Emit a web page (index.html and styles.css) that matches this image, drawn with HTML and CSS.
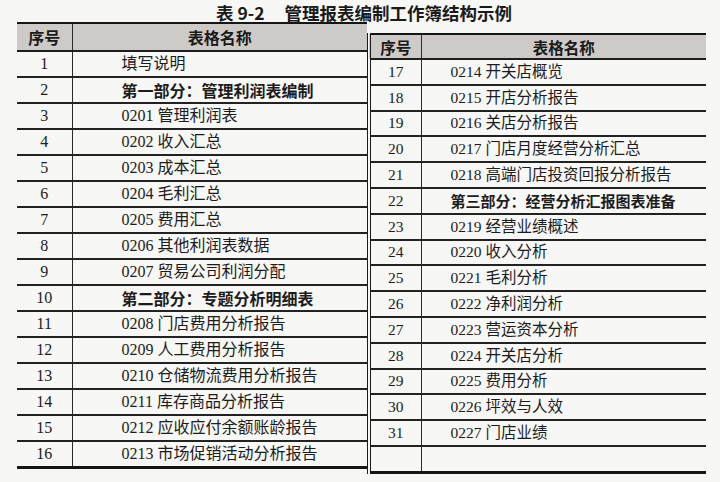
FILE: index.html
```html
<!DOCTYPE html>
<html lang="zh-CN">
<head>
<meta charset="utf-8">
<link rel="stylesheet" href="styles.css">
</head>
<body>
<div class="page">
  <h1 class="title"><span class="tno">表 9-2</span><span>管理报表编制工作簿结构示例</span></h1>
  <div class="tables">
    <table class="tbl left">
      <colgroup><col class="c-num"><col></colgroup>
      <thead><tr><th>序号</th><th>表格名称</th></tr></thead>
      <tbody>
        <tr><td class="num">1</td><td class="name">填写说明</td></tr>
        <tr><td class="num">2</td><td class="name bold">第一部分：管理利润表编制</td></tr>
        <tr><td class="num">3</td><td class="name">0201 管理利润表</td></tr>
        <tr><td class="num">4</td><td class="name">0202 收入汇总</td></tr>
        <tr><td class="num">5</td><td class="name">0203 成本汇总</td></tr>
        <tr><td class="num">6</td><td class="name">0204 毛利汇总</td></tr>
        <tr><td class="num">7</td><td class="name">0205 费用汇总</td></tr>
        <tr><td class="num">8</td><td class="name">0206 其他利润表数据</td></tr>
        <tr><td class="num">9</td><td class="name">0207 贸易公司利润分配</td></tr>
        <tr><td class="num">10</td><td class="name bold">第二部分：专题分析明细表</td></tr>
        <tr><td class="num">11</td><td class="name">0208 门店费用分析报告</td></tr>
        <tr><td class="num">12</td><td class="name">0209 人工费用分析报告</td></tr>
        <tr><td class="num">13</td><td class="name">0210 仓储物流费用分析报告</td></tr>
        <tr><td class="num">14</td><td class="name">0211 库存商品分析报告</td></tr>
        <tr><td class="num">15</td><td class="name">0212 应收应付余额账龄报告</td></tr>
        <tr><td class="num">16</td><td class="name">0213 市场促销活动分析报告</td></tr>
      </tbody>
    </table>
    <table class="tbl right">
      <colgroup><col class="c-num2"><col></colgroup>
      <thead><tr><th>序号</th><th>表格名称</th></tr></thead>
      <tbody>
        <tr><td class="num">17</td><td class="name">0214 开关店概览</td></tr>
        <tr><td class="num">18</td><td class="name">0215 开店分析报告</td></tr>
        <tr><td class="num">19</td><td class="name">0216 关店分析报告</td></tr>
        <tr><td class="num">20</td><td class="name">0217 门店月度经营分析汇总</td></tr>
        <tr><td class="num">21</td><td class="name">0218 高端门店投资回报分析报告</td></tr>
        <tr><td class="num">22</td><td class="name bold">第三部分：经营分析汇报图表准备</td></tr>
        <tr><td class="num">23</td><td class="name">0219 经营业绩概述</td></tr>
        <tr><td class="num">24</td><td class="name">0220 收入分析</td></tr>
        <tr><td class="num">25</td><td class="name">0221 毛利分析</td></tr>
        <tr><td class="num">26</td><td class="name">0222 净利润分析</td></tr>
        <tr><td class="num">27</td><td class="name">0223 营运资本分析</td></tr>
        <tr><td class="num">28</td><td class="name">0224 开关店分析</td></tr>
        <tr><td class="num">29</td><td class="name">0225 费用分析</td></tr>
        <tr><td class="num">30</td><td class="name">0226 坪效与人效</td></tr>
        <tr><td class="num">31</td><td class="name">0227 门店业绩</td></tr>
        <tr><td class="num"></td><td class="name"></td></tr>
      </tbody>
    </table>
  </div>
</div>
</body>
</html>
```

FILE: styles.css
```css
html, body {
  margin: 0;
  padding: 0;
  background: #f7f7f5;
}

.page {
  width: 720px;
  height: 482px;
  overflow: hidden;
  color: #1c1c1c;
  font-family: "Liberation Serif", "Noto Sans CJK SC", serif;
}

.title {
  margin: 0;
  padding: 3px 0 0 216px;
  height: 19px;
  display: flex;
  gap: 20px;
  font-family: "Noto Sans CJK SC", "Liberation Sans", sans-serif;
  font-size: 17.5px;
  line-height: 19px;
  font-weight: 700;
  color: #1a1a1a;
}

.tables {
  display: flex;
  align-items: flex-start;
  padding-left: 17px;
}

.tbl {
  border-collapse: collapse;
  table-layout: fixed;
}

.left {
  width: 350px;
  border-top: 2px solid #151515;
  border-bottom: 3px solid #151515;
}

.right {
  width: 339px;
  margin-top: 11px;
  border-top: 2px solid #151515;
  border-bottom: 3px solid #151515;
  border-left: 4px double #1a1a1a;
}

.c-num { width: 55px; }
.c-num2 { width: 52px; }

.tbl th {
  background: #cdcac8;
  font-family: "Noto Sans CJK SC", "Liberation Sans", sans-serif;
  font-size: 16px;
  line-height: 20px;
  font-weight: 700;
  text-align: center;
  padding: 0;
  border-bottom: 2px solid #1e1e1e;
  color: #1a1a1a;
}

.left th { height: 26px; }
.right th { height: 23px; font-size: 15.5px; }

.tbl th:first-child,
.tbl td.num {
  border-right: 1px solid #2a2a2a;
}

.tbl td {
  padding: 0;
  font-size: 16px;
  line-height: 20px;
  border-bottom: 2px solid #222;
  white-space: nowrap;
}

.left td { height: 24px; }
.right td { height: 23.8px; font-size: 15.5px; }

.tbl tr:last-child td {
  border-bottom: 0;
}

.num {
  text-align: center;
}

.left .name { padding-left: 49px; }
.right .name { padding-left: 29px; }

.name.bold {
  font-family: "Noto Sans CJK SC", "Liberation Sans", sans-serif;
  font-weight: 700;
}

.right .name.bold {
  font-size: 15px;
}
```
